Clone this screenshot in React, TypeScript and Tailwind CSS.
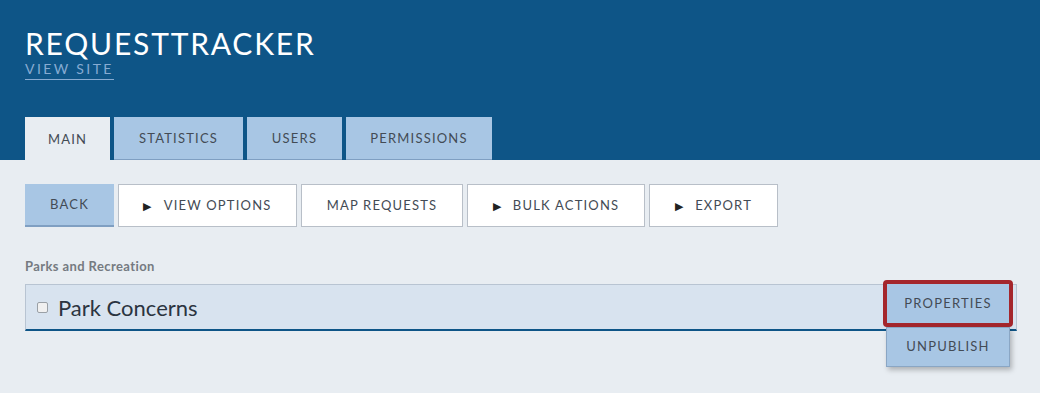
import React from 'react';

const font = { fontFamily: 'Lato, "Open Sans", sans-serif' };

const tabs = [
    { label: 'MAIN', w: 'w-[85px]', active: true },
    { label: 'STATISTICS', w: 'w-[129px]', active: false },
    { label: 'USERS', w: 'w-[95px]', active: false },
    { label: 'PERMISSIONS', w: 'w-[146px]', active: false },
];

const actions = [
    { label: 'VIEW OPTIONS', w: 'w-[179px]', arrow: true },
    { label: 'MAP REQUESTS', w: 'w-[162px]', arrow: false },
    { label: 'BULK ACTIONS', w: 'w-[178px]', arrow: true },
    { label: 'EXPORT', w: 'w-[129px]', arrow: true },
];

export default function App() {
    return (
        <div className="w-[1040px] h-[393px] bg-[#e8edf2] overflow-hidden" style={font}>
            <header className="bg-[#0e5587] h-[160px] px-[25px] pt-[27px] flex flex-col">
                <h1 className="text-white text-[30px] leading-[32px] tracking-[1.8px] font-normal">REQUESTTRACKER</h1>
                <a className="self-start text-[#86abd2] text-[14px] tracking-[2.4px] leading-[16px] mt-[2px] pb-[2px] border-b border-[#86abd2]">VIEW SITE</a>
                <nav className="mt-auto flex gap-[4px]">
                    {tabs.map(t => (
                        <div
                            key={t.label}
                            className={`${t.w} h-[43px] pt-[2px] flex items-center justify-center text-[13px] tracking-[1.2px] text-[#434b55] ${t.active ? 'bg-[#e8edf2]' : 'bg-[#a8c6e4] border-b border-[#7f9fc2]'}`}
                        >
                            {t.label}
                        </div>
                    ))}
                </nav>
            </header>

            <div className="px-[25px] pt-[24px]">
                <div className="flex gap-[4px]">
                    <button className="w-[89px] h-[43px] bg-[#a8c6e4] border-b-2 border-[#7f9fc2] text-[13px] tracking-[1.2px] text-[#434b55]">
                        BACK
                    </button>
                    {actions.map(a => (
                        <button
                            key={a.label}
                            className={`${a.w} h-[43px] bg-white border border-[#b8bfc8] flex items-center justify-center gap-[11px] text-[13px] tracking-[1.2px] text-[#434b55]`}
                        >
                            {a.arrow && <span className="text-[11px] leading-none text-[#222]">▶</span>}
                            {a.label}
                        </button>
                    ))}
                </div>

                <div className="mt-[31px] text-[13px] leading-[16px] tracking-[0.4px] font-bold text-[#757a81]">Parks and Recreation</div>

                <div className="relative mt-[10px] w-[992px] h-[47px] bg-[#d8e3ef] border border-[#b8c4d2] border-b-2 border-b-[#0e5587] flex items-center pl-[11px]">
                    <span className="w-[11px] h-[11px] rounded-[2px] border border-[#9aa0a6] bg-[#f0f0f0]" />
                    <span className="ml-[10px] text-[22px] text-[#2b3440]">Park Concerns</span>

                    <div className="absolute right-[3px] top-[-5px] flex flex-col items-center">
                        <div className="w-[130px] h-[47px] bg-[#a8c6e4] border-[4px] border-[#a4262c] rounded-[4px] flex items-center justify-center text-[13px] tracking-[1.2px] text-[#434b55]">
                            PROPERTIES
                        </div>
                        <div className="w-[124px] h-[40px] bg-[#a8c6e4] border border-[#8aa6c4] shadow-[2px_3px_5px_rgba(0,0,0,0.25)] flex items-center justify-center text-[13px] tracking-[1.2px] text-[#434b55]">
                            UNPUBLISH
                        </div>
                    </div>
                </div>
            </div>
        </div>
    );
}
